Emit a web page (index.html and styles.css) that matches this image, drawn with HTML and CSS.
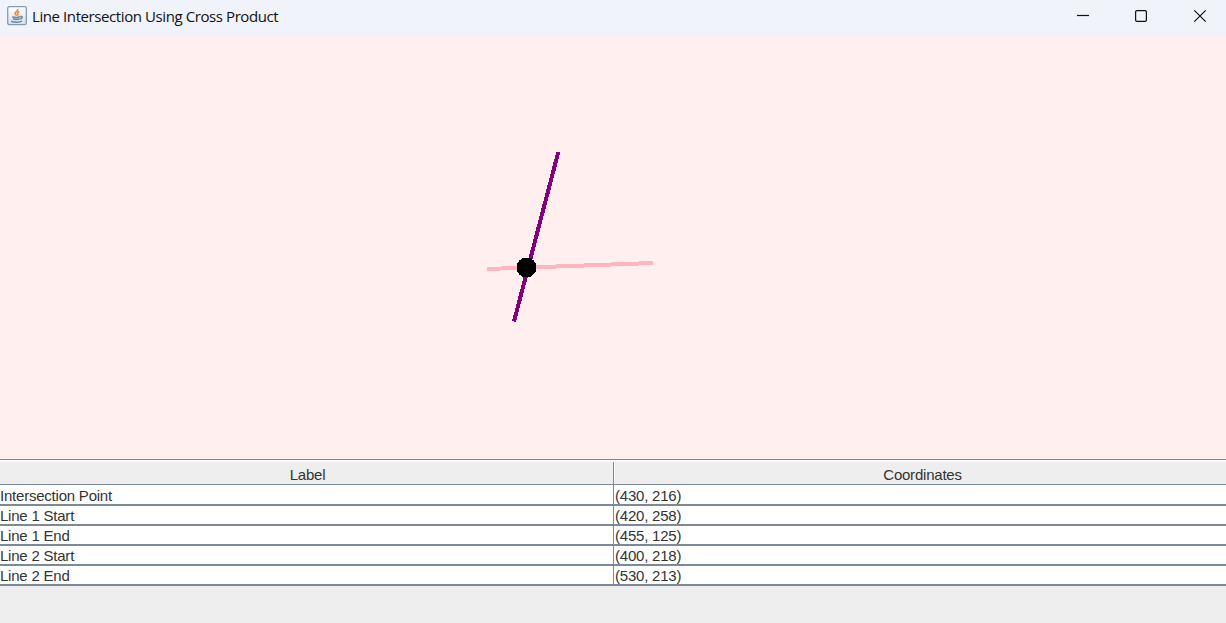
FILE: index.html
```html
<!DOCTYPE html>
<html lang="en">
<head>
<meta charset="utf-8">
<title>Line Intersection Using Cross Product</title>
<link rel="stylesheet" href="styles.css">
</head>
<body>
<div class="window">
  <header class="titlebar">
    <svg class="app-icon" width="20" height="20" viewBox="0 0 20 20">
      <defs><linearGradient id="tile" x1="0" y1="0" x2="0" y2="1"><stop offset="0" stop-color="#fff"/><stop offset="1" stop-color="#d8e0e7"/></linearGradient></defs>
      <rect x=".7" y=".7" width="18.6" height="18" rx="1.8" fill="url(#tile)" stroke="#7f9db2" stroke-width="1.3"/>
      <path d="M10.800 3c.6 2-3 2.700-2.700 4.500.1 1 1.200 1.500 1.300 2.300M12.200 5.500c-2 .8-2.200 1.800-1.300 2.600.4.5.1 1.100-.4 1.600" fill="none" stroke="#ee8c3c" stroke-width="1.600"/>
      <path d="M5.200 10.700c2 .8 5.800.8 8.100 0M6 12.800c2 .8 4.800.8 6.700 0M4.200 15.200c3 1.400 8.300 1.300 10.800 0M13.400 10.500c2.700-.6 2.300 2-.2 2.400" fill="none" stroke="#6689a5" stroke-width="1.500"/>
    </svg>
    <h1 class="title">Line Intersection Using Cross Product</h1>
    <div class="controls">
      <svg class="control" viewBox="0 0 58 35"><path d="M17 15.500h12"/></svg>
      <svg class="control" viewBox="0 0 58 35"><rect x="17.600" y="10.600" width="10.800" height="10.800" rx="1.300"/></svg>
      <svg class="control close" viewBox="0 0 50 35"><path d="M18.300 10.300l11.400 11.400M29.700 10.300l-11.400 11.400"/></svg>
    </div>
  </header>
  <svg class="canvas" viewBox="0 35 1226 424" shape-rendering="crispEdges">
    <path class="line-one" d="M514 321.500L558.300 152"/>
    <path class="line-two" d="M487 269L653 263"/>
    <circle cx="526.500" cy="267.500" r="9.900"/>
  </svg>
  <table class="points">
    <colgroup><col class="label-column"><col></colgroup>
    <thead><tr><th>Label</th><th>Coordinates</th></tr></thead>
    <tbody>
      <tr><td>Intersection Point</td><td>(430, 216)</td></tr>
      <tr><td>Line 1 Start</td><td>(420, 258)</td></tr>
      <tr><td>Line 1 End</td><td>(455, 125)</td></tr>
      <tr><td>Line 2 Start</td><td>(400, 218)</td></tr>
      <tr><td>Line 2 End</td><td>(530, 213)</td></tr>
    </tbody>
  </table>
</div>
</body>
</html>
```
FILE: styles.css
```css
* { box-sizing: border-box; }
body { margin: 0; }
.window {
  width: 1226px;
  height: 623px;
  display: flex;
  flex-direction: column;
  overflow: hidden;
  background: #eee;
}
.titlebar {
  flex: none;
  height: 35px;
  display: flex;
  align-items: flex-start;
  padding-left: 7px;
  background: #f0f3fa;
}
.app-icon { margin-top: 6px; }
.title {
  margin: 5px 0 0 5px;
  font: 400 15px/22px "Open Sans", "Noto Sans", sans-serif;
  letter-spacing: -0.41px;
  white-space: nowrap;
  color: #111;
}
.controls { margin-left: auto; display: flex; }
.control {
  flex: none;
  width: 58px;
  height: 35px;
  fill: none;
  stroke: #111;
  stroke-width: 1.2;
}
.close { width: 50px; }
.canvas { flex: none; display: block; width: 1226px; height: 424px; background: #ffefee; }
.line-one { stroke: #800080; stroke-width: 4; }
.line-two { stroke: #ffb6c1; stroke-width: 4; }
.points {
  width: 1226px;
  table-layout: fixed;
  border-collapse: separate;
  border-spacing: 0;
  font: 15px/18px "Liberation Sans", Arial, sans-serif;
  letter-spacing: -0.22px;
  color: #333;
}
.label-column { width: 614px; }
.points th {
  height: 26px;
  padding: 6px 0 0 1px;
  font-weight: 400;
  line-height: 18px;
  border-top: 1px solid #7a8a99;
  border-bottom: 1px solid #7a8a99;
  background: #eee;
  box-shadow: inset 0 2px #fafafa;
}
.points th:first-child {
  background: linear-gradient(#7a8a99, #7a8a99) right / 1px 100% no-repeat #eee;
}
.points th:last-child { padding-left: 5px; box-shadow: inset 1px 2px #fafafa; }
.points td {
  height: 20px;
  padding: 1px 0 0 1px;
  line-height: 17px;
  background: #fff;
  border-bottom: 2px solid #7a8a99;
}
.points tbody tr:first-child td { height: 21px; padding-top: 2px; }
.points td:first-child { padding-left: 0; border-right: 1px solid #7a8a99; }
```
